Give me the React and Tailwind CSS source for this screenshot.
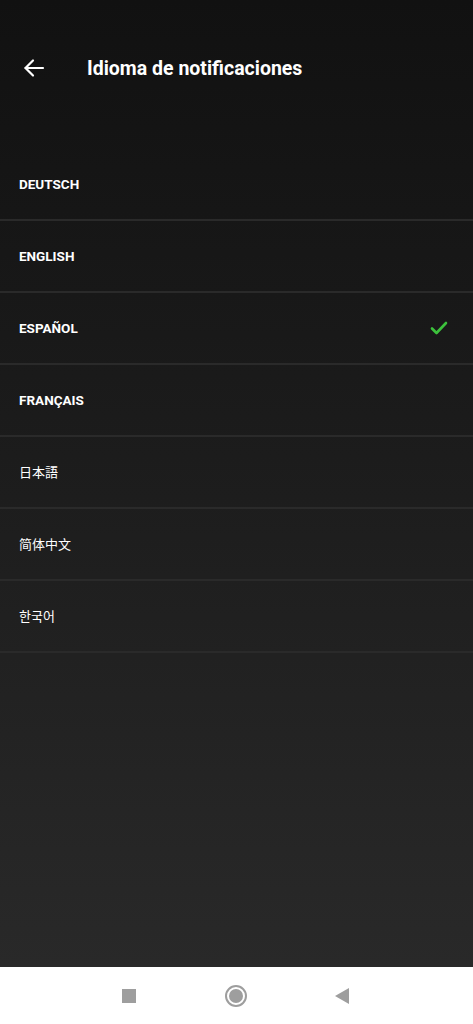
import React from "react";

const langs = [
  { name: "DEUTSCH", cjk: false },
  { name: "ENGLISH", cjk: false },
  { name: "ESPAÑOL", cjk: false, selected: true },
  { name: "FRANÇAIS", cjk: false },
  { name: "日本語", cjk: true, font: "'Noto Sans CJK JP'" },
  { name: "简体中文", cjk: true, font: "'Noto Sans CJK SC'" },
  { name: "한국어", cjk: true, font: "'Noto Sans CJK KR'" },
];

export default function App() {
  return (
    <div className="w-[473px] h-[1024px] flex flex-col font-['Roboto',sans-serif] overflow-hidden">
      <div className="flex-1 flex flex-col bg-gradient-to-b from-[#111111] to-[#292929]">
        <div className="h-[149px] flex flex-col">
          <div className="mt-[40px] h-[55px] flex items-center">
            <div className="w-[68px] flex justify-center">
              <svg width="24" height="24" viewBox="0 0 24 24" fill="none" stroke="white" strokeWidth="2.2" strokeLinecap="round" strokeLinejoin="round">
                <path d="M21 12H3.5" />
                <path d="M11 4.5L3.5 12L11 19.5" />
              </svg>
            </div>
            <div className="ml-[19px] mt-[2px] text-white text-[19.5px] font-bold">Idioma de notificaciones</div>
          </div>
        </div>
        {langs.map((l) => (
          <div key={l.name} className="h-[72px] flex items-center justify-between px-[19px] border-b-2 border-[#2a2a2a]">
            {l.cjk ? (
              <span
                className="text-white text-[13px]"
                style={{ fontFamily: `${l.font}, sans-serif` }}
              >
                {l.name}
              </span>
            ) : (
              <span className="text-white text-[13.5px] font-bold">{l.name}</span>
            )}
            {l.selected && (
              <svg width="18" height="14" viewBox="0 0 18 14" fill="none" stroke="#3cc13c" strokeWidth="2.6" strokeLinecap="round" strokeLinejoin="round" className="mr-[6px]">
                <path d="M2 7.5L6.5 12L16 2" />
              </svg>
            )}
          </div>
        ))}
      </div>
      <div className="h-[57px] bg-white flex items-center justify-between pl-[122px] pr-[124px] shrink-0">
        <div className="w-[14px] h-[14px] bg-[#9e9e9e]" />
        <div className="w-[22px] h-[22px] rounded-full border-[2px] border-[#9e9e9e] flex items-center justify-center">
          <div className="w-[14px] h-[14px] rounded-full bg-[#9e9e9e]" />
        </div>
        <svg width="14" height="16" viewBox="0 0 14 16">
          <path d="M14 0V16L0 8Z" fill="#9e9e9e" />
        </svg>
      </div>
    </div>
  );
}
